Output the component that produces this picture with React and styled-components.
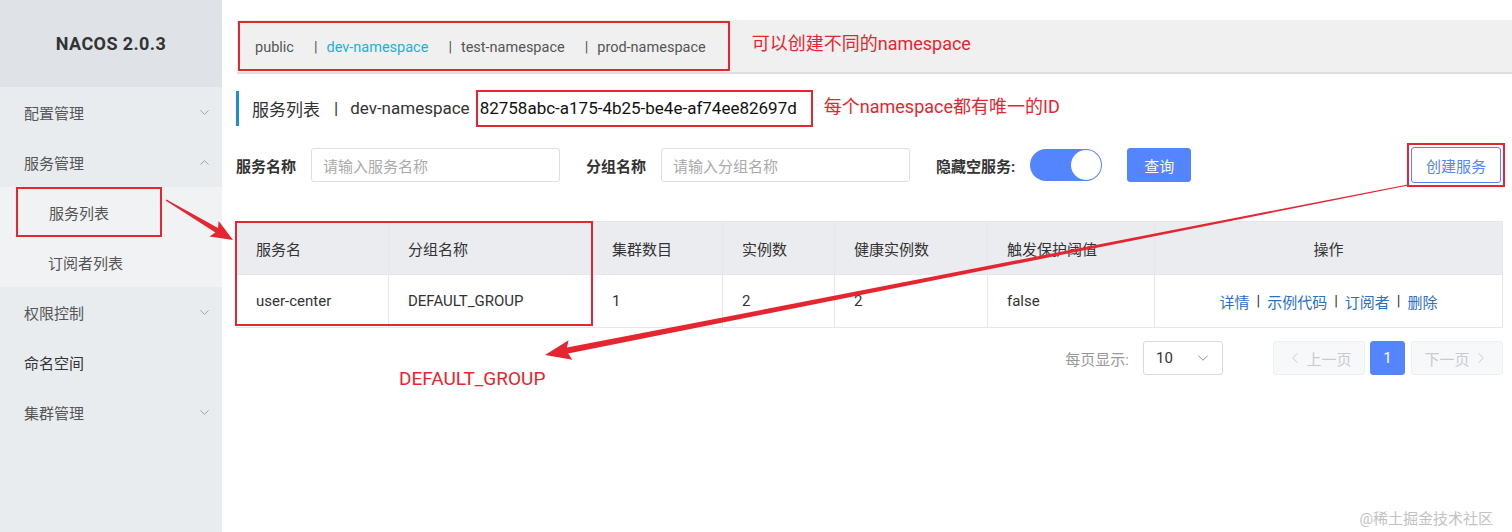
import React from "react";
import styled, { createGlobalStyle } from "styled-components";
import { ChevronDown, ChevronUp, ChevronLeft, ChevronRight } from "lucide-react";

const GlobalStyle = createGlobalStyle`
  body {
    margin: 0;
    background: #fff;
    font-family: Roboto, "Noto Sans CJK SC", sans-serif;
  }
`;

const RED = "#e52530";
const BLUE = "#5584ff";

const Page = styled.div`
  position: relative;
  display: flex;
  width: 1512px;
  height: 532px;
  overflow: hidden;
`;

const Sidebar = styled.aside`
  width: 222px;
  flex-shrink: 0;
  background: #e9ecef;
  display: flex;
  flex-direction: column;
`;

const Logo = styled.div`
  height: 87px;
  background: #dfe3e7;
  display: flex;
  align-items: center;
  justify-content: center;
  font-size: 18px;
  font-weight: 700;
  color: #333;
  letter-spacing: 0.4px;
`;

const MenuItem = styled.div`
  height: 50px;
  display: flex;
  align-items: center;
  justify-content: space-between;
  padding: 0 10px 0 24px;
  font-size: 15px;
  color: ${(p) => (p.dark ? "#333" : "#555")};
  svg {
    color: #888;
  }
`;

const SubMenu = styled.div`
  background: #f1f2f4;
`;

const SubItem = styled.div`
  height: 50px;
  display: flex;
  align-items: center;
  font-size: 15px;
  color: #555;
  padding-left: ${(p) => (p.boxed ? "16px" : "48px")};
`;

const SubBox = styled.span`
  display: flex;
  align-items: center;
  box-sizing: border-box;
  width: 146px;
  height: 50px;
  padding-left: 31px;
  border: 2px solid ${RED};
`;

const Main = styled.main`
  flex: 1;
  padding: 20px 10px 0 14px;
  display: flex;
  flex-direction: column;
`;

const NamespaceBar = styled.div`
  height: 54px;
  margin: 0 -10px 0 1px;
  background: #f0f0f0;
  border-bottom: 2px solid #dedede;
  display: flex;
  align-items: center;
  box-sizing: border-box;
`;

const NamespaceBox = styled.div`
  height: 50px;
  box-sizing: border-box;
  border: 2px solid ${RED};
  display: flex;
  align-items: center;
  padding: 2px 22px 0 15px;
  margin-left: 1px;
`;

const NsItem = styled.span`
  font-size: 14.5px;
  color: ${(p) => (p.active ? "#1ab2d8" : "#555")};
  margin-right: ${(p) => (p.last ? "0" : "20px")};
  white-space: nowrap;
  b {
    font-weight: 400;
    color: #555;
    margin-right: 9px;
  }
`;

const Note = styled.span`
  color: ${RED};
  font-size: 18px;
  white-space: nowrap;
  margin-left: ${(p) => p.gap || 0}px;
  margin-bottom: ${(p) => p.lift || 0}px;
`;

const TitleRow = styled.div`
  display: flex;
  align-items: center;
  margin-top: 13px;
  height: 42px;
`;

const TitleText = styled.div`
  height: 35px;
  border-left: 3px solid #1a8fca;
  padding-left: 13px;
  display: flex;
  align-items: center;
  font-size: 17px;
  color: #333;
  white-space: nowrap;
`;

const TitleSep = styled.span`
  margin: 0 12px 0 14px;
`;

const IdBox = styled.span`
  height: 37px;
  box-sizing: border-box;
  display: flex;
  align-items: center;
  border: 2px solid ${RED};
  padding: 0 14px 0 2px;
  margin: 0 11px 0 6px;
  font-size: 17px;
  color: #111;
`;

const FilterRow = styled.div`
  display: flex;
  align-items: center;
  margin-top: 14px;
  height: 44px;
`;

const Label = styled.span`
  font-size: 15px;
  font-weight: 700;
  color: #333;
  margin: 0 15px 0 ${(p) => p.gap || 0}px;
  white-space: nowrap;
`;

const Input = styled.div`
  width: 249px;
  height: 34px;
  box-sizing: border-box;
  border: 1px solid #dcdee3;
  border-radius: 3px;
  display: flex;
  align-items: center;
  padding-left: 11px;
  font-size: 15px;
  color: #aaa;
`;

const Switch = styled.div`
  width: 72px;
  height: 32px;
  border-radius: 16px;
  background: ${BLUE};
  display: flex;
  justify-content: flex-end;
  align-items: center;
  padding: 0 1px;
  box-sizing: border-box;
  &::after {
    content: "";
    width: 30px;
    height: 30px;
    border-radius: 50%;
    background: #fff;
  }
`;

const Button = styled.div`
  height: ${(p) => (p.outline ? "36px" : "34px")};
  padding: 0 ${(p) => (p.outline ? "14px" : "16px")};
  box-sizing: border-box;
  display: flex;
  align-items: center;
  border-radius: 3px;
  font-size: 15px;
  background: ${(p) => (p.outline ? "#fff" : BLUE)};
  color: ${(p) => (p.outline ? BLUE : "#fff")};
  border: 1px solid ${BLUE};
  margin-left: ${(p) => p.gap || 0}px;
`;

const CreateBox = styled.div`
  margin: 0 -2px 0 auto;
  padding: 2px;
  border: 2px solid ${RED};
`;

const Table = styled.div`
  margin-top: 34px;
  display: grid;
  grid-template-columns: 152px 204px 130px 112px 153px 167px 348px;
  border-top: 1px solid #e6e7eb;
  border-left: 1px solid #e6e7eb;
`;

const Cell = styled.div`
  height: 53px;
  box-sizing: border-box;
  display: flex;
  align-items: center;
  justify-content: ${(p) => (p.center ? "center" : "flex-start")};
  padding-left: ${(p) => (p.center ? "0" : "19px")};
  border-right: 1px solid #e6e7eb;
  border-bottom: 1px solid #e6e7eb;
  background: ${(p) => (p.head ? "#ebecf0" : "#fff")};
  font-size: 15px;
  color: #333;
`;

const Link = styled.span`
  color: #2b6fc7;
`;

const Sep = styled.span`
  color: #333;
  margin: 0 7px;
`;

const Pager = styled.div`
  display: flex;
  align-items: center;
  justify-content: flex-end;
  margin-top: 13px;
  height: 34px;
`;

const PagerLabel = styled.span`
  font-size: 15px;
  color: #999;
  margin-right: 14px;
`;

const Select = styled.div`
  width: 80px;
  height: 34px;
  box-sizing: border-box;
  border: 1px solid #d9dbe0;
  border-radius: 3px;
  display: flex;
  align-items: center;
  justify-content: space-between;
  padding: 0 10px 0 12px;
  font-size: 15px;
  color: #333;
  margin-right: 50px;
  svg {
    color: #888;
  }
`;

const PageBtn = styled.div`
  height: 34px;
  width: ${(p) => p.w}px;
  box-sizing: border-box;
  display: flex;
  align-items: center;
  justify-content: center;
  gap: 2px;
  border-radius: 3px;
  font-size: 15px;
  margin-left: ${(p) => p.gap || 0}px;
  background: ${(p) => (p.active ? BLUE : "#f7f8fa")};
  color: ${(p) => (p.active ? "#fff" : "#c8cacf")};
  border: 1px solid ${(p) => (p.active ? BLUE : "#eceef1")};
`;

const Overlay = styled.svg`
  position: absolute;
  left: 0;
  top: 0;
  pointer-events: none;
`;

const FloatNote = styled.span`
  position: absolute;
  left: 399px;
  top: 367px;
  color: ${RED};
  font-size: 19px;
`;

const Watermark = styled.span`
  position: absolute;
  right: 19px;
  bottom: 4px;
  color: #c2c2c2;
  font-size: 15px;
`;

// tapered arrow polygon from start to tip
function arrowPoints(x1, y1, x2, y2, head, headW, w0, w1) {
  const dx = x2 - x1;
  const dy = y2 - y1;
  const len = Math.hypot(dx, dy);
  const ux = dx / len;
  const uy = dy / len;
  const nx = -uy;
  const ny = ux;
  const bx = x2 - ux * head;
  const by = y2 - uy * head;
  const p = (x, y, k) => `${(x + nx * k).toFixed(1)},${(y + ny * k).toFixed(1)}`;
  return [
    p(x1, y1, w0 / 2),
    p(bx + ux * 3, by + uy * 3, w1 / 2),
    p(bx, by, headW),
    `${x2},${y2}`,
    p(bx, by, -headW),
    p(bx + ux * 3, by + uy * 3, -w1 / 2),
    p(x1, y1, -w0 / 2),
  ].join(" ");
}

const columns = ["服务名", "分组名称", "集群数目", "实例数", "健康实例数", "触发保护阈值", "操作"];
const row = ["user-center", "DEFAULT_GROUP", "1", "2", "2", "false"];
const namespaces = ["public", "dev-namespace", "test-namespace", "prod-namespace"];

export default function App() {
  return (
    <Page>
      <GlobalStyle />
      <Sidebar>
        <Logo>NACOS 2.0.3</Logo>
        <MenuItem>
          配置管理 <ChevronDown size={15} strokeWidth={1.2} />
        </MenuItem>
        <MenuItem>
          服务管理 <ChevronUp size={15} strokeWidth={1.2} />
        </MenuItem>
        <SubMenu>
          <SubItem boxed>
            <SubBox>服务列表</SubBox>
          </SubItem>
          <SubItem>订阅者列表</SubItem>
        </SubMenu>
        <MenuItem>
          权限控制 <ChevronDown size={15} strokeWidth={1.2} />
        </MenuItem>
        <MenuItem dark>命名空间</MenuItem>
        <MenuItem>
          集群管理 <ChevronDown size={15} strokeWidth={1.2} />
        </MenuItem>
      </Sidebar>

      <Main>
        <NamespaceBar>
          <NamespaceBox>
            {namespaces.map((ns, i) => (
              <NsItem key={ns} active={i === 1} last={i === namespaces.length - 1}>
                {i > 0 && <b>|</b>}
                {ns}
              </NsItem>
            ))}
          </NamespaceBox>
          <Note gap={22} lift={8}>可以创建不同的namespace</Note>
        </NamespaceBar>

        <TitleRow>
          <TitleText>
            服务列表<TitleSep>|</TitleSep>dev-namespace
          </TitleText>
          <IdBox>82758abc-a175-4b25-be4e-af74ee82697d</IdBox>
          <Note lift={6}>每个namespace都有唯一的ID</Note>
        </TitleRow>

        <FilterRow>
          <Label>服务名称</Label>
          <Input>请输入服务名称</Input>
          <Label gap={26}>分组名称</Label>
          <Input>请输入分组名称</Input>
          <Label gap={26}>隐藏空服务:</Label>
          <Switch />
          <Button gap={25}>查询</Button>
          <CreateBox>
            <Button outline>创建服务</Button>
          </CreateBox>
        </FilterRow>

        <Table>
          {columns.map((c, i) => (
            <Cell head key={c} center={i === 6}>
              {c}
            </Cell>
          ))}
          {row.map((v, i) => (
            <Cell key={i}>{v}</Cell>
          ))}
          <Cell center>
            <Link>详情</Link>
            <Sep>|</Sep>
            <Link>示例代码</Link>
            <Sep>|</Sep>
            <Link>订阅者</Link>
            <Sep>|</Sep>
            <Link>删除</Link>
          </Cell>
        </Table>

        <Pager>
          <PagerLabel>每页显示:</PagerLabel>
          <Select>
            10 <ChevronDown size={18} strokeWidth={1.2} />
          </Select>
          <PageBtn w={92}>
            <ChevronLeft size={18} strokeWidth={1.3} /> 上一页
          </PageBtn>
          <PageBtn w={35} gap={5} active>
            1
          </PageBtn>
          <PageBtn w={92} gap={6}>
            下一页 <ChevronRight size={18} strokeWidth={1.3} />
          </PageBtn>
        </Pager>
      </Main>

      <Overlay width="1512" height="532" viewBox="0 0 1512 532">
        <rect x="236" y="222" width="356" height="103" fill="none" stroke={RED} strokeWidth="2" />
        <polygon points={arrowPoints(166, 200, 233, 240, 22, 9, 1.5, 5)} fill={RED} />
        <polygon points={arrowPoints(1408, 185, 545, 355, 26, 10, 1, 6)} fill={RED} />
      </Overlay>
      <FloatNote>DEFAULT_GROUP</FloatNote>
      <Watermark>@稀土掘金技术社区</Watermark>
    </Page>
  );
}
